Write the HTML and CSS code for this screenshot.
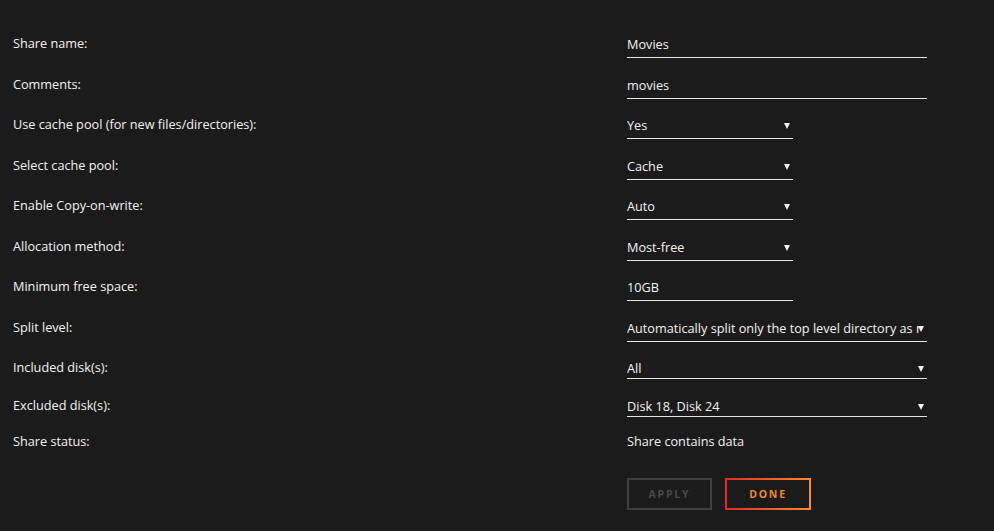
FILE: index.html
```html
<!DOCTYPE html>
<html>
<head>
<meta charset="utf-8">
<link rel="stylesheet" href="styles.css">
</head>
<body>
<form class="share-form">
  <div class="row"><span class="label">Share name:</span><div class="field long">Movies</div></div>
  <div class="row"><span class="label">Comments:</span><div class="field long">movies</div></div>
  <div class="row"><span class="label">Use cache pool (for new files/directories):</span><div class="field short select">Yes</div></div>
  <div class="row"><span class="label">Select cache pool:</span><div class="field short select">Cache</div></div>
  <div class="row"><span class="label">Enable Copy-on-write:</span><div class="field short select">Auto</div></div>
  <div class="row"><span class="label">Allocation method:</span><div class="field short select">Most-free</div></div>
  <div class="row"><span class="label">Minimum free space:</span><div class="field short">10GB</div></div>
  <div class="row"><span class="label">Split level:</span><div class="field long select"><span class="clip-text">Automatically split only the top level directory as r</span></div></div>
  <div class="row included"><span class="label">Included disk(s):</span><div class="field long select compact">All</div></div>
  <div class="row excluded"><span class="label">Excluded disk(s):</span><div class="field long select compact">Disk 18, Disk 24</div></div>
  <div class="row status"><span class="label">Share status:</span><span class="value">Share contains data</span></div>
  <div class="row actions"><span></span><div class="buttons"><button type="button" class="btn apply">APPLY</button><button type="button" class="btn done">DONE</button></div></div>
</form>
</body>
</html>
```
FILE: styles.css
```css
html, body {
  margin: 0;
  background: #1c1b1b;
  height: 100%;
}
body {
  font-family: "Open Sans", "Noto Sans", sans-serif;
  font-size: 12.7px;
  color: #f2f2f2;
}
.share-form {
  padding: 24px 0 0 13px;
  display: flex;
  flex-direction: column;
}
.row {
  display: grid;
  grid-template-columns: 614px 300px;
  height: 40.5px;
  align-items: start;
}
.label {
  line-height: 38px;
  white-space: nowrap;
}
.field {
  position: relative;
  box-sizing: border-box;
  height: 34px;
  padding-top: 11px;
  line-height: 18px;
  border-bottom: 1px solid #e6e6e6;
  white-space: nowrap;
  overflow: hidden;
}
.field.compact { height: 31px; }
.field.long { width: 300px; }
.field.short { width: 166px; }
.select::after {
  content: "";
  position: absolute;
  right: 3px;
  top: 18px;
  border-left: 3px solid transparent;
  border-right: 3px solid transparent;
  border-top: 6px solid #f2f2f2;
}
.clip-text {
  display: block;
  width: 292px;
  overflow: hidden;
}
.row.included { height: 37.5px; }
.row.excluded { height: 36px; }
.row.status { height: 56.5px; }
.value { line-height: 38px; }
.buttons {
  display: flex;
  gap: 13px;
}
.btn {
  font-family: "Open Sans", "Noto Sans", sans-serif;
  font-size: 10.5px;
  font-weight: bold;
  letter-spacing: 1.8px;
  height: 32px;
  padding: 0;
  background: transparent;
  cursor: pointer;
}
.apply {
  width: 85px;
  border: 2px solid #3f3f3f;
  color: #4a4a4a;
}
.done {
  width: 86px;
  border: 2px solid transparent;
  color: #f0892f;
  background:
    linear-gradient(#1c1b1b, #1c1b1b) padding-box,
    linear-gradient(90deg, #e22828, #ff8c2f) border-box;
}
```
